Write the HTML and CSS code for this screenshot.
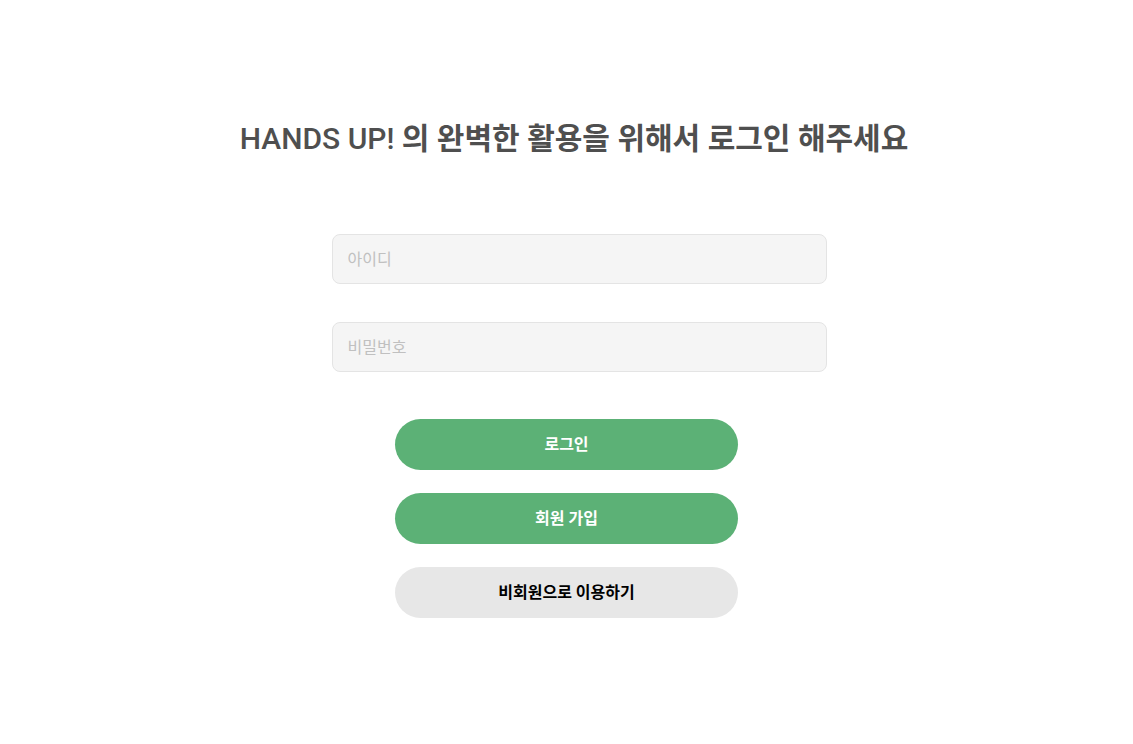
FILE: index.html
```html
<!DOCTYPE html>
<html lang="ko">
<head>
<meta charset="utf-8">
<title>로그인</title>
<link rel="stylesheet" href="styles.css">
</head>
<body>
<main class="page">
  <h1 class="title"><span class="brand">HANDS UP!</span> 의 완벽한 활용을 위해서 로그인 해주세요</h1>
  <form class="form">
    <div class="fields">
      <input class="field" type="text" placeholder="아이디">
      <input class="field" type="password" placeholder="비밀번호">
    </div>
    <div class="actions">
      <button type="button" class="btn btn-green">로그인</button>
      <button type="button" class="btn btn-green">회원 가입</button>
      <button type="button" class="btn btn-gray">비회원으로 이용하기</button>
    </div>
  </form>
</main>
</body>
</html>
```
FILE: styles.css
```css
html, body {
  margin: 0;
  padding: 0;
  background: #fff;
}
body {
  font-family: Roboto, "Noto Sans CJK KR", sans-serif;
}
.page {
  display: flex;
  flex-direction: column;
  align-items: center;
  padding-top: 117px;
}
.title {
  margin: 0;
  font-size: 30px;
  line-height: 44px;
  font-weight: 700;
  color: #4f4f4f;
  padding-left: 15px;
}
.brand {
  font-weight: 500;
}
.form {
  display: flex;
  flex-direction: column;
  align-items: center;
  margin-top: 73px;
}
.fields {
  width: 470px;
  display: flex;
  flex-direction: column;
  gap: 38px;
}
.field {
  box-sizing: border-box;
  width: 495px;
  height: 50px;
  padding: 0 15px;
  border: 1px solid #e4e4e4;
  border-radius: 8px;
  background: #f5f5f5;
  font-family: Roboto, "Noto Sans CJK KR", sans-serif;
  font-size: 16px;
  color: #333;
  outline: none;
}
.field::placeholder {
  color: #c0c0c0;
}
.actions {
  display: flex;
  flex-direction: column;
  gap: 23px;
  margin-top: 47px;
}
.btn {
  width: 343px;
  height: 51px;
  padding: 0 0 4px;
  border: none;
  border-radius: 26px;
  font-family: Roboto, "Noto Sans CJK KR", sans-serif;
  font-size: 16px;
  font-weight: 700;
  cursor: pointer;
}
.btn-green {
  background: #5cb176;
  color: #fff;
}
.btn-gray {
  background: #e7e7e7;
  color: #000;
}
```
